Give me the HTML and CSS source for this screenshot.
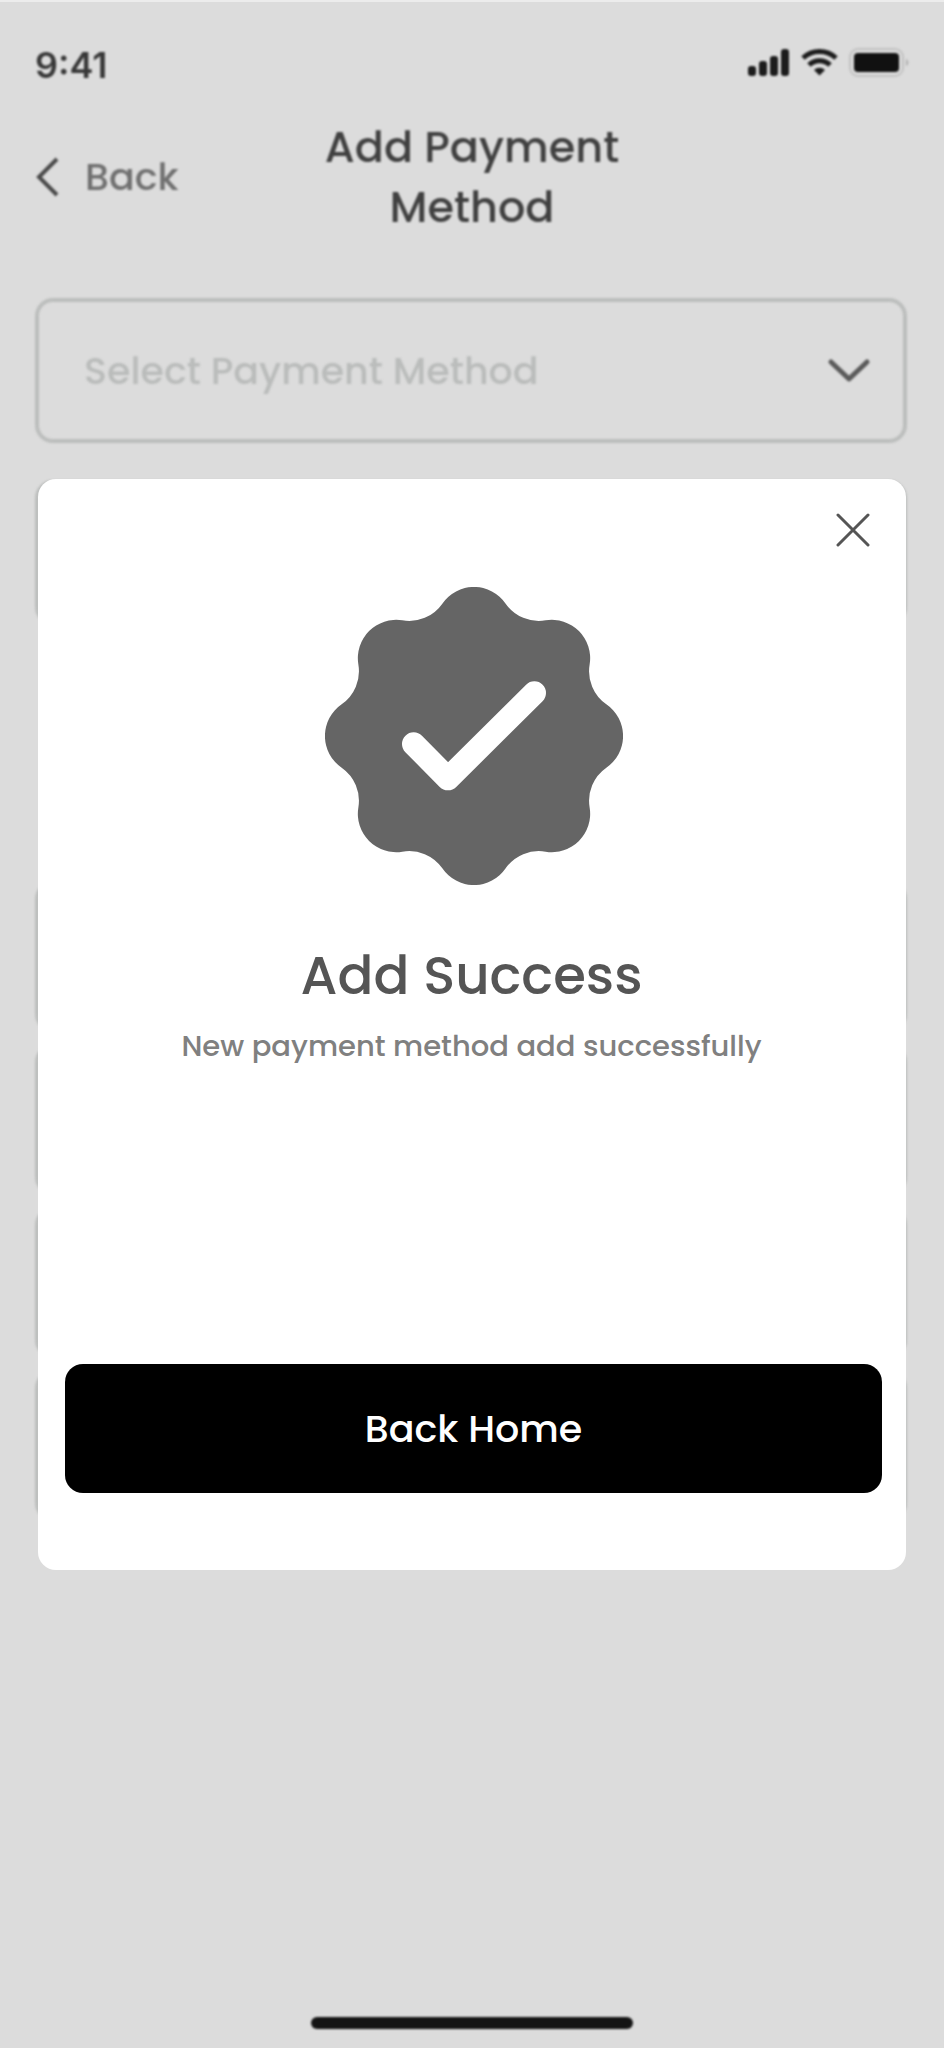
FILE: index.html
```html
<!DOCTYPE html>
<html lang="en">
<head>
<meta charset="utf-8">
<meta name="viewport" content="width=device-width, initial-scale=1">
<title>Add Payment Method</title>
<link rel="stylesheet" href="styles.css">
</head>
<body>
<div class="app">
  <div class="screen">
    <div class="status">
      <span class="status-time">9:41</span>
      <svg class="status-icons" viewBox="0 0 162 32" aria-hidden="true">
        <g fill="#1c1c1c">
          <rect x="1" y="19" width="8" height="10" rx="3"/>
          <rect x="12" y="14" width="8" height="15" rx="3"/>
          <rect x="23" y="9" width="8" height="20" rx="3"/>
          <rect x="34" y="2" width="8" height="27" rx="3"/>
        </g>
        <g fill="none" stroke="#1c1c1c" stroke-width="5">
          <path d="M56 11a24 24 0 0 1 33 0"/>
          <path d="M62 18a15 15 0 0 1 21 0"/>
        </g>
        <path d="M67 23a8 8 0 0 1 11 0l-5.500 5.500z" fill="#1c1c1c"/>
        <rect x="103" y="2" width="53" height="27" rx="8" fill="none" stroke="#c2c2c2" stroke-width="2"/>
        <rect x="107" y="6" width="45" height="19" rx="4" fill="#111"/>
        <path d="M159 12v7c3-1 3-6 0-7z" fill="#b0b0b0"/>
      </svg>
    </div>
    <header class="header">
      <a class="back" href="#">
        <svg class="back-icon" viewBox="0 0 24 40" aria-hidden="true"><path d="M22 2 4 20l18 18" fill="none" stroke="#4a4a4a" stroke-width="4"/></svg>
        <span>Back</span>
      </a>
      <h1 class="title">Add Payment Method</h1>
    </header>
    <form class="form">
      <div class="picker">
        <select class="field picker-select" aria-label="Payment method">
          <option>Select Payment Method</option>
        </select>
        <svg class="picker-icon" viewBox="0 0 44 28" aria-hidden="true"><path d="m4 5 18 17L40 5" fill="none" stroke="#5a5a5a" stroke-width="5" stroke-linecap="round" stroke-linejoin="round"/></svg>
      </div>
      <input class="field" type="text" aria-label="Account name">
      <div class="cards">
        <div class="card"></div>
        <div class="card"></div>
        <div class="card"></div>
        <div class="card"></div>
      </div>
    </form>
    <div class="home-bar"></div>
  </div>

  <div class="overlay">
    <section class="modal" role="dialog" aria-modal="true" aria-labelledby="modal-title">
      <button class="close" type="button" aria-label="Close">
        <svg class="close-icon" viewBox="0 0 34 34" aria-hidden="true"><path d="m2 2 30 30M32 2 2 32" stroke="#555" stroke-width="3" stroke-linecap="round"/></svg>
      </button>
      <svg class="badge" viewBox="-447 -447 894 894" aria-hidden="true">
        <path fill="#656565" d="M-95-397A115 115 0 0 1 95-397A121 121 0 0 0 215-347A115 115 0 0 1 347-215A121 121 0 0 0 397-95A115 115 0 0 1 397 95A121 121 0 0 0 347 215A115 115 0 0 1 215 347A121 121 0 0 0 95 397A115 115 0 0 1-95 397A121 121 0 0 0-215 347A115 115 0 0 1-347 215A121 121 0 0 0-397 95A115 115 0 0 1-397-95A121 121 0 0 0-347-215A115 115 0 0 1-215-347A121 121 0 0 0-95-397z"/>
        <path d="M-181 24-78 128 181-129" fill="none" stroke="#fff" stroke-width="70" stroke-linecap="round" stroke-linejoin="round"/>
      </svg>
      <h2 class="modal-title" id="modal-title">Add Success</h2>
      <p class="modal-text">New payment method add successfully</p>
      <button class="primary" type="button">Back Home</button>
    </section>
  </div>
</div>
</body>
</html>
```
FILE: styles.css
```css
* {
  box-sizing: border-box;
}

body {
  margin: 0;
  background: #dcdcdc;
  font-family: Poppins, Inter, "Liberation Sans", sans-serif;
  font-weight: 500;
}

.app {
  position: relative;
  border-top: 2px solid #ececec;
}

.screen {
  display: flex;
  flex-direction: column;
  min-height: calc(100vh - 2px);
  padding: 41px 35px 19px;
  filter: blur(1px);
}

.status {
  display: flex;
  justify-content: space-between;
  height: 42px;
}

.status-time {
  font-family: Inter, "Liberation Sans", sans-serif;
  font-size: 36px;
  font-weight: 600;
  line-height: 44px;
  color: #383838;
}

.status-icons {
  width: 162px;
  height: 32px;
  margin-top: 4px;
}

.header {
  display: grid;
  grid-template-columns: 1fr 320px 1fr;
  align-items: center;
  margin-top: 32px;
}

.back {
  display: flex;
  align-items: center;
  gap: 26px;
  font-size: 38px;
  line-height: 60px;
  color: #707070;
  text-decoration: none;
}

.back-icon {
  width: 24px;
  height: 40px;
}

.title {
  margin: 0;
  font-size: 43px;
  font-weight: 500;
  line-height: 60px;
  text-align: center;
  color: #404040;
}

.form {
  display: flex;
  flex-direction: column;
  margin: 61px 2px 0 0;
}

.picker {
  display: grid;
  align-items: center;
  margin-bottom: 37px;
}

.picker > * {
  grid-area: 1 / 1;
}

.field,
.card {
  width: 100%;
  height: 145px;
  border: 4px solid #bcbebd;
  border-radius: 18px;
  background: transparent;
}

.picker-select {
  appearance: none;
  padding: 0 45px;
  font: inherit;
  font-size: 38px;
  color: #babcbb;
}

.picker-icon {
  justify-self: end;
  width: 44px;
  height: 28px;
  margin-right: 36px;
  pointer-events: none;
}

.cards {
  display: grid;
  gap: 12px;
  margin-top: 256px;
}

.card {
  height: 151px;
}

.home-bar {
  width: 322px;
  height: 12px;
  margin: auto auto 0;
  border-radius: 6px;
  background: #141414;
}

.overlay {
  position: absolute;
  inset: 0;
  padding: 477px 38px 0;
}

.modal {
  display: flex;
  flex-direction: column;
  align-items: center;
  padding: 34px 24px 77px 27px;
  border-radius: 18px;
  background: #fff;
}

.close {
  align-self: flex-end;
  display: flex;
  margin-right: 12px;
  padding: 0;
  border: 0;
  background: none;
}

.close-icon {
  width: 34px;
  height: 34px;
}

.badge {
  width: 298px;
  height: 298px;
  margin-top: 40px;
}

.modal-title,
.modal-text {
  padding-right: 4px;
}

.modal-title {
  margin: 55px 0 0;
  font-size: 53px;
  font-weight: 500;
  line-height: 72px;
  color: #555;
}

.modal-text {
  margin: 12px 0 0;
  font-size: 29px;
  line-height: 44px;
  color: #808080;
}

.primary {
  width: 100%;
  height: 129px;
  margin-top: 296px;
  border: 0;
  border-radius: 18px;
  background: #000;
  color: #fff;
  font: inherit;
  font-size: 38px;
}
```
